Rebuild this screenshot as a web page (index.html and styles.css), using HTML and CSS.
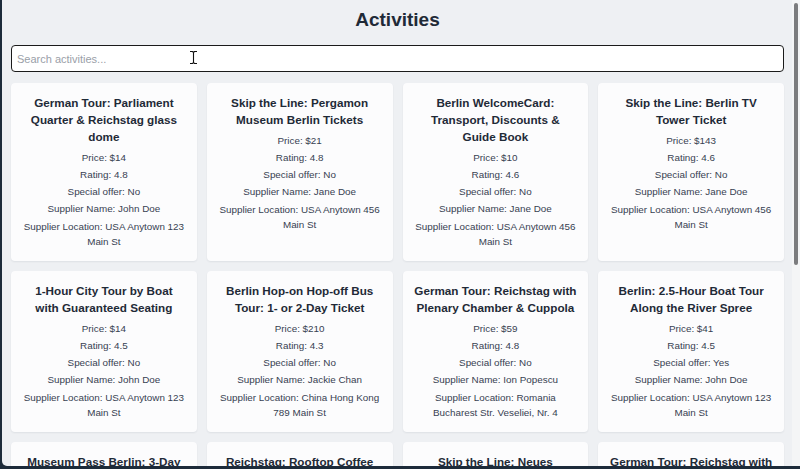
FILE: index.html
```html
<!DOCTYPE html>
<html lang="en">
<head>
<meta charset="utf-8">
<title>Activities</title>
<link rel="stylesheet" href="styles.css">
</head>
<body>
<div class="window">
  <main class="page">
    <h1 class="heading">Activities</h1>
    <div class="search-wrap">
      <input class="search" type="text" placeholder="Search activities...">
      <svg class="cursor" width="9" height="15" viewBox="0 0 9 15"><path d="M1 1.5h2.5l1 1 1-1H8M4.5 2.5v10M1 13.5h2.5l1-1 1 1H8" fill="none" stroke="#fff" stroke-width="2.6"/><path d="M1 1.5h2.5l1 1 1-1H8M4.5 2.5v10M1 13.5h2.5l1-1 1 1H8" fill="none" stroke="#111" stroke-width="1.1"/></svg>
    </div>
    <section class="grid">
      <article class="card">
        <h2 class="card-title">German Tour: Parliament Quarter &amp; Reichstag glass dome</h2>
        <p class="card-line">Price: $14</p>
        <p class="card-line">Rating: 4.8</p>
        <p class="card-line">Special offer: No</p>
        <p class="card-line">Supplier Name: John Doe</p>
        <p class="card-line">Supplier Location: USA Anytown 123 Main St</p>
      </article>
      <article class="card">
        <h2 class="card-title">Skip the Line: Pergamon Museum Berlin Tickets</h2>
        <p class="card-line">Price: $21</p>
        <p class="card-line">Rating: 4.8</p>
        <p class="card-line">Special offer: No</p>
        <p class="card-line">Supplier Name: Jane Doe</p>
        <p class="card-line">Supplier Location: USA Anytown 456 Main St</p>
      </article>
      <article class="card">
        <h2 class="card-title">Berlin WelcomeCard: Transport, Discounts &amp; Guide Book</h2>
        <p class="card-line">Price: $10</p>
        <p class="card-line">Rating: 4.6</p>
        <p class="card-line">Special offer: No</p>
        <p class="card-line">Supplier Name: Jane Doe</p>
        <p class="card-line">Supplier Location: USA Anytown 456 Main St</p>
      </article>
      <article class="card">
        <h2 class="card-title">Skip the Line: Berlin TV Tower Ticket</h2>
        <p class="card-line">Price: $143</p>
        <p class="card-line">Rating: 4.6</p>
        <p class="card-line">Special offer: No</p>
        <p class="card-line">Supplier Name: Jane Doe</p>
        <p class="card-line">Supplier Location: USA Anytown 456 Main St</p>
      </article>
      <article class="card">
        <h2 class="card-title">1-Hour City Tour by Boat with Guaranteed Seating</h2>
        <p class="card-line">Price: $14</p>
        <p class="card-line">Rating: 4.5</p>
        <p class="card-line">Special offer: No</p>
        <p class="card-line">Supplier Name: John Doe</p>
        <p class="card-line">Supplier Location: USA Anytown 123 Main St</p>
      </article>
      <article class="card">
        <h2 class="card-title">Berlin Hop-on Hop-off Bus Tour: 1- or 2-Day Ticket</h2>
        <p class="card-line">Price: $210</p>
        <p class="card-line">Rating: 4.3</p>
        <p class="card-line">Special offer: No</p>
        <p class="card-line">Supplier Name: Jackie Chan</p>
        <p class="card-line">Supplier Location: China Hong Kong 789 Main St</p>
      </article>
      <article class="card">
        <h2 class="card-title">German Tour: Reichstag with Plenary Chamber &amp; Cuppola</h2>
        <p class="card-line">Price: $59</p>
        <p class="card-line">Rating: 4.8</p>
        <p class="card-line">Special offer: No</p>
        <p class="card-line">Supplier Name: Ion Popescu</p>
        <p class="card-line">Supplier Location: Romania Bucharest Str. Veseliei, Nr. 4</p>
      </article>
      <article class="card">
        <h2 class="card-title">Berlin: 2.5-Hour Boat Tour Along the River Spree</h2>
        <p class="card-line">Price: $41</p>
        <p class="card-line">Rating: 4.5</p>
        <p class="card-line">Special offer: Yes</p>
        <p class="card-line">Supplier Name: John Doe</p>
        <p class="card-line">Supplier Location: USA Anytown 123 Main St</p>
      </article>
      <article class="card">
        <h2 class="card-title">Museum Pass Berlin: 3-Day Pass for 30 Museums</h2>
        <p class="card-line">Price: $35</p>
        <p class="card-line">Rating: 4.7</p>
      </article>
      <article class="card">
        <h2 class="card-title">Reichstag: Rooftop Coffee Break with View</h2>
        <p class="card-line">Price: $25</p>
        <p class="card-line">Rating: 4.6</p>
      </article>
      <article class="card">
        <h2 class="card-title">Skip the Line: Neues Museum Berlin Tickets</h2>
        <p class="card-line">Price: $18</p>
        <p class="card-line">Rating: 4.7</p>
      </article>
      <article class="card">
        <h2 class="card-title">German Tour: Reichstag with Plenary Chamber &amp; Cuppola</h2>
        <p class="card-line">Price: $59</p>
        <p class="card-line">Rating: 4.8</p>
      </article>
    </section>
  </main>
  <div class="scrollbar"><div class="thumb"></div></div>
</div>
</body>
</html>
```

FILE: styles.css
```css
html, body {
  margin: 0;
  padding: 0;
  height: 100%;
  overflow: hidden;
  background: #1d2b3a;
}

.window {
  display: flex;
  height: 466px;
  margin-left: 2px;
  background: #eef0f3;
  border-bottom-left-radius: 5px;
  overflow: hidden;
  font-family: "Liberation Sans", Arial, sans-serif;
}

.page {
  flex: 1;
  min-width: 0;
  padding: 0 8px 0 9px;
}

.heading {
  margin: 0;
  padding-top: 8px;
  height: 45px;
  box-sizing: border-box;
  text-align: center;
  font-size: 19px;
  line-height: 24px;
  font-weight: 700;
  color: #1f2a37;
}

.search-wrap {
  position: relative;
}

.search {
  display: block;
  width: 100%;
  box-sizing: border-box;
  height: 27px;
  border: 1.5px solid #1b1b1b;
  border-radius: 4px;
  background: #ffffff;
  padding: 0 5px;
  font-family: "Liberation Sans", Arial, sans-serif;
  font-size: 11px;
  color: #333;
  outline: none;
}

.search::placeholder {
  color: #9aa0a8;
}

.cursor {
  position: absolute;
  left: 178px;
  top: 5px;
}

.grid {
  display: grid;
  grid-template-columns: repeat(4, 1fr);
  gap: 10px;
  margin-top: 11px;
}

.card {
  background: #fcfcfd;
  border-radius: 4px;
  box-shadow: 0 1px 2px rgba(15, 23, 42, 0.07);
  padding: 10.5px 11px 10.25px;
  text-align: center;
}

.card-title {
  margin: 0 0 5px;
  font-size: 11.7px;
  line-height: 17px;
  font-weight: 700;
  color: #1f2a37;
}

.card-line {
  margin: 0 0 2.25px;
  font-size: 9.85px;
  line-height: 15px;
  color: #374151;
}

.scrollbar {
  width: 8px;
  flex: none;
  background: #f4f5f6;
  position: relative;
}

.thumb {
  position: absolute;
  left: 2px;
  top: 3px;
  width: 4px;
  height: 262px;
  border-radius: 2px;
  background: #7b7c7e;
}
```
